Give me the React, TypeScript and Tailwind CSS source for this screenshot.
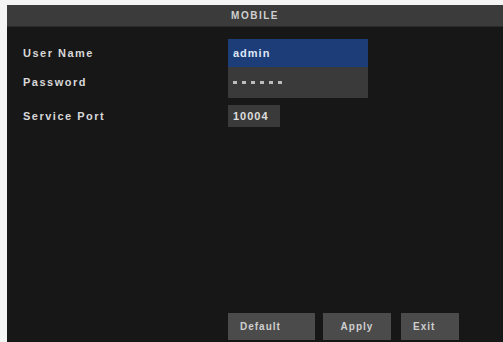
import React from "react";

const font = { fontFamily: '"Liberation Sans", Arial, sans-serif' };

function Row({ label, children }: { label: string; children: React.ReactNode }) {
  return (
    <div className="flex items-center">
      <div className="w-[205px] text-[11px] font-bold tracking-[1.5px] text-[#d8d8d8]">{label}</div>
      {children}
    </div>
  );
}

export default function App() {
  return (
    <div className="w-[503px] h-[342px] bg-[#f4f4f4] pl-[7px] pt-[5px] overflow-hidden" style={font}>
      <div className="flex flex-col h-full bg-[#171717]">
        {/* title bar */}
        <div className="h-[22px] shrink-0 bg-[#3b3b3b] flex items-center justify-center text-[10px] font-bold tracking-[1.5px] text-[#cfcfcf] border-b border-[#2a2a2a]">
          MOBILE
        </div>

        <div className="flex flex-col pl-[16px] pt-[12px]">
          <Row label="User Name">
            <div className="w-[140px] h-[28px] bg-[#1d3d78] flex items-center pl-[5px] text-[11px] font-bold tracking-[1px] text-[#dfe6f5]">
              admin
            </div>
          </Row>
          <Row label="Password">
            <div className="w-[140px] h-[31px] bg-[#3a3a3a] flex items-center gap-[5px] pl-[5px] text-[#c8c8c8]">
              {Array.from({ length: 6 }).map((_, i) => (
                <span key={i} className="w-[4px] h-[3px] bg-[#bdbdbd]" />
              ))}
            </div>
          </Row>
          <div className="h-[7px]" />
          <Row label="Service Port">
            <div className="w-[52px] h-[22px] bg-[#3a3a3a] flex items-center pl-[5px] text-[11px] font-bold tracking-[1px] text-[#dedede]">
              10004
            </div>
          </Row>
        </div>

        <div className="flex-1" />

        <div className="flex pl-[221px] pb-[2px] gap-[8px] text-[10px] font-bold tracking-[1px] text-[#cfcfcf]">
          <div className="w-[87px] h-[27px] bg-[#4b4b4b] flex items-center pl-[12px]">Default</div>
          <div className="w-[68px] h-[27px] bg-[#4b4b4b] flex items-center justify-center">Apply</div>
          <div className="w-[58px] h-[27px] bg-[#4b4b4b] flex items-center pl-[12px] ml-[2px]">Exit</div>
        </div>
      </div>
    </div>
  );
}
